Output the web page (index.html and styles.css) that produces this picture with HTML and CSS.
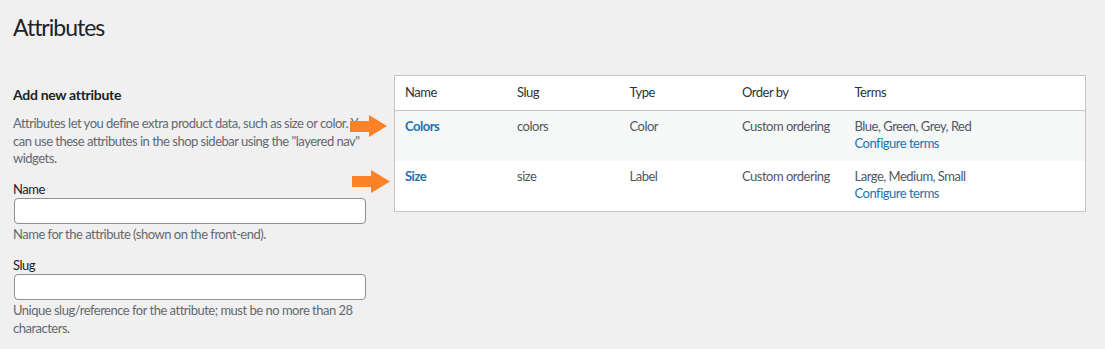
FILE: index.html
```html
<!DOCTYPE html>
<html lang="en">
<head>
  <meta charset="UTF-8" />
  <meta name="viewport" content="width=device-width, initial-scale=1" />
  <title>Attributes</title>
  <link rel="stylesheet" href="styles.css">
</head>
<body>
  <h1 class="page-title">Attributes</h1>

  <div class="cols">
    <!-- left: add form -->
    <div class="col-left">
      <h2>Add new attribute</h2>
      <p class="desc">Attributes let you define extra product data, such as size or color. You can use these attributes in the shop sidebar using the "layered nav" widgets.</p>

      <div class="field">
        <label for="attr-name">Name</label>
        <input type="text" id="attr-name">
        <p class="desc">Name for the attribute (shown on the front-end).</p>
      </div>

      <div class="field">
        <label for="attr-slug">Slug</label>
        <input type="text" id="attr-slug">
        <p class="desc">Unique slug/reference for the attribute; must be no more than 28 characters.</p>
      </div>
    </div>

    <!-- right: existing attributes -->
    <div class="col-right">
      <div class="table-wrap">
        <table class="attr-table">
          <thead>
            <tr>
              <th>Name</th>
              <th>Slug</th>
              <th>Type</th>
              <th>Order by</th>
              <th class="terms">Terms</th>
            </tr>
          </thead>
          <tbody>
            <tr class="alt">
              <td><a href="#" class="row-title">Colors</a></td>
              <td>colors</td>
              <td>Color</td>
              <td>Custom ordering</td>
              <td class="terms">Blue, Green, Grey, Red<br><a href="#">Configure terms</a></td>
            </tr>
            <tr>
              <td><a href="#" class="row-title">Size</a></td>
              <td>size</td>
              <td>Label</td>
              <td>Custom ordering</td>
              <td class="terms">Large, Medium, Small<br><a href="#">Configure terms</a></td>
            </tr>
          </tbody>
        </table>

        <svg class="arrow arrow-1" width="37" height="22" viewBox="0 0 37 22"><polygon points="0,6 19,6 19,0 37,11 19,22 19,17 0,17" /></svg>
        <svg class="arrow arrow-2" width="38" height="23" viewBox="0 0 38 23"><polygon points="0,6 19,6 19,0 38,11.5 19,23 19,17 0,17" /></svg>
      </div>
    </div>
  </div>
</body>
</html>
```

FILE: styles.css
```css
* { box-sizing: border-box; }

body {
  margin: 0;
  padding: 0 19px 0 13px;
  background: #f0f0f1;
  color: #3c434a;
  font-family: Lato, "Open Sans", sans-serif;
  font-size: 13px;
  line-height: 17.5px;
  letter-spacing: -0.5px;
}

.page-title {
  font-size: 23px;
  font-weight: 400;
  line-height: 29px;
  letter-spacing: -1px;
  color: #1d2327;
  margin: 0;
  padding-top: 13px;
}

.cols {
  display: grid;
  grid-template-columns: 370px 1fr;
  gap: 11px;
  margin-top: 33px;
}

/* left column */
.col-left h2 {
  font-size: 14px;
  font-weight: 700;
  line-height: 18px;
  letter-spacing: -0.3px;
  color: #1d2327;
  margin: 11px 0 11px;
}

.desc {
  margin: 0;
  color: #646970;
}

.field {
  margin-top: 13px;
}

.field label {
  display: block;
  color: #1d2327;
}

.field input {
  display: block;
  width: 352px;
  height: 26px;
  margin: 0 0 2px 1px;
  background: #fff;
  border: 1px solid #8c8f94;
  border-radius: 4px;
}

/* right column */
.table-wrap {
  position: relative;
}

.attr-table {
  width: 100%;
  table-layout: fixed;
  border-collapse: collapse;
  background: #fff;
  border: 1px solid #c3c4c7;
}

.attr-table th,
.attr-table td {
  width: 112.5px;
  text-align: left;
  vertical-align: top;
  white-space: nowrap;
  padding: 8px 10px;
}

.attr-table th {
  font-weight: 400;
  color: #2c3338;
  border-bottom: 1px solid #c3c4c7;
}

.attr-table td {
  color: #50575e;
  padding-top: 7px;
}

.attr-table .terms {
  width: auto;
}

.attr-table tr.alt td {
  background: #f6f7f7;
}

.attr-table td:first-child {
  height: 36px;
}

.attr-table a {
  color: #2271b1;
  text-decoration: none;
}

.attr-table a.row-title {
  font-weight: 700;
}

/* annotation arrows */
.arrow {
  position: absolute;
  fill: #fd8127;
}

.arrow-1 { left: -44px; top: 40px; }
.arrow-2 { left: -42px; top: 95px; }
```
